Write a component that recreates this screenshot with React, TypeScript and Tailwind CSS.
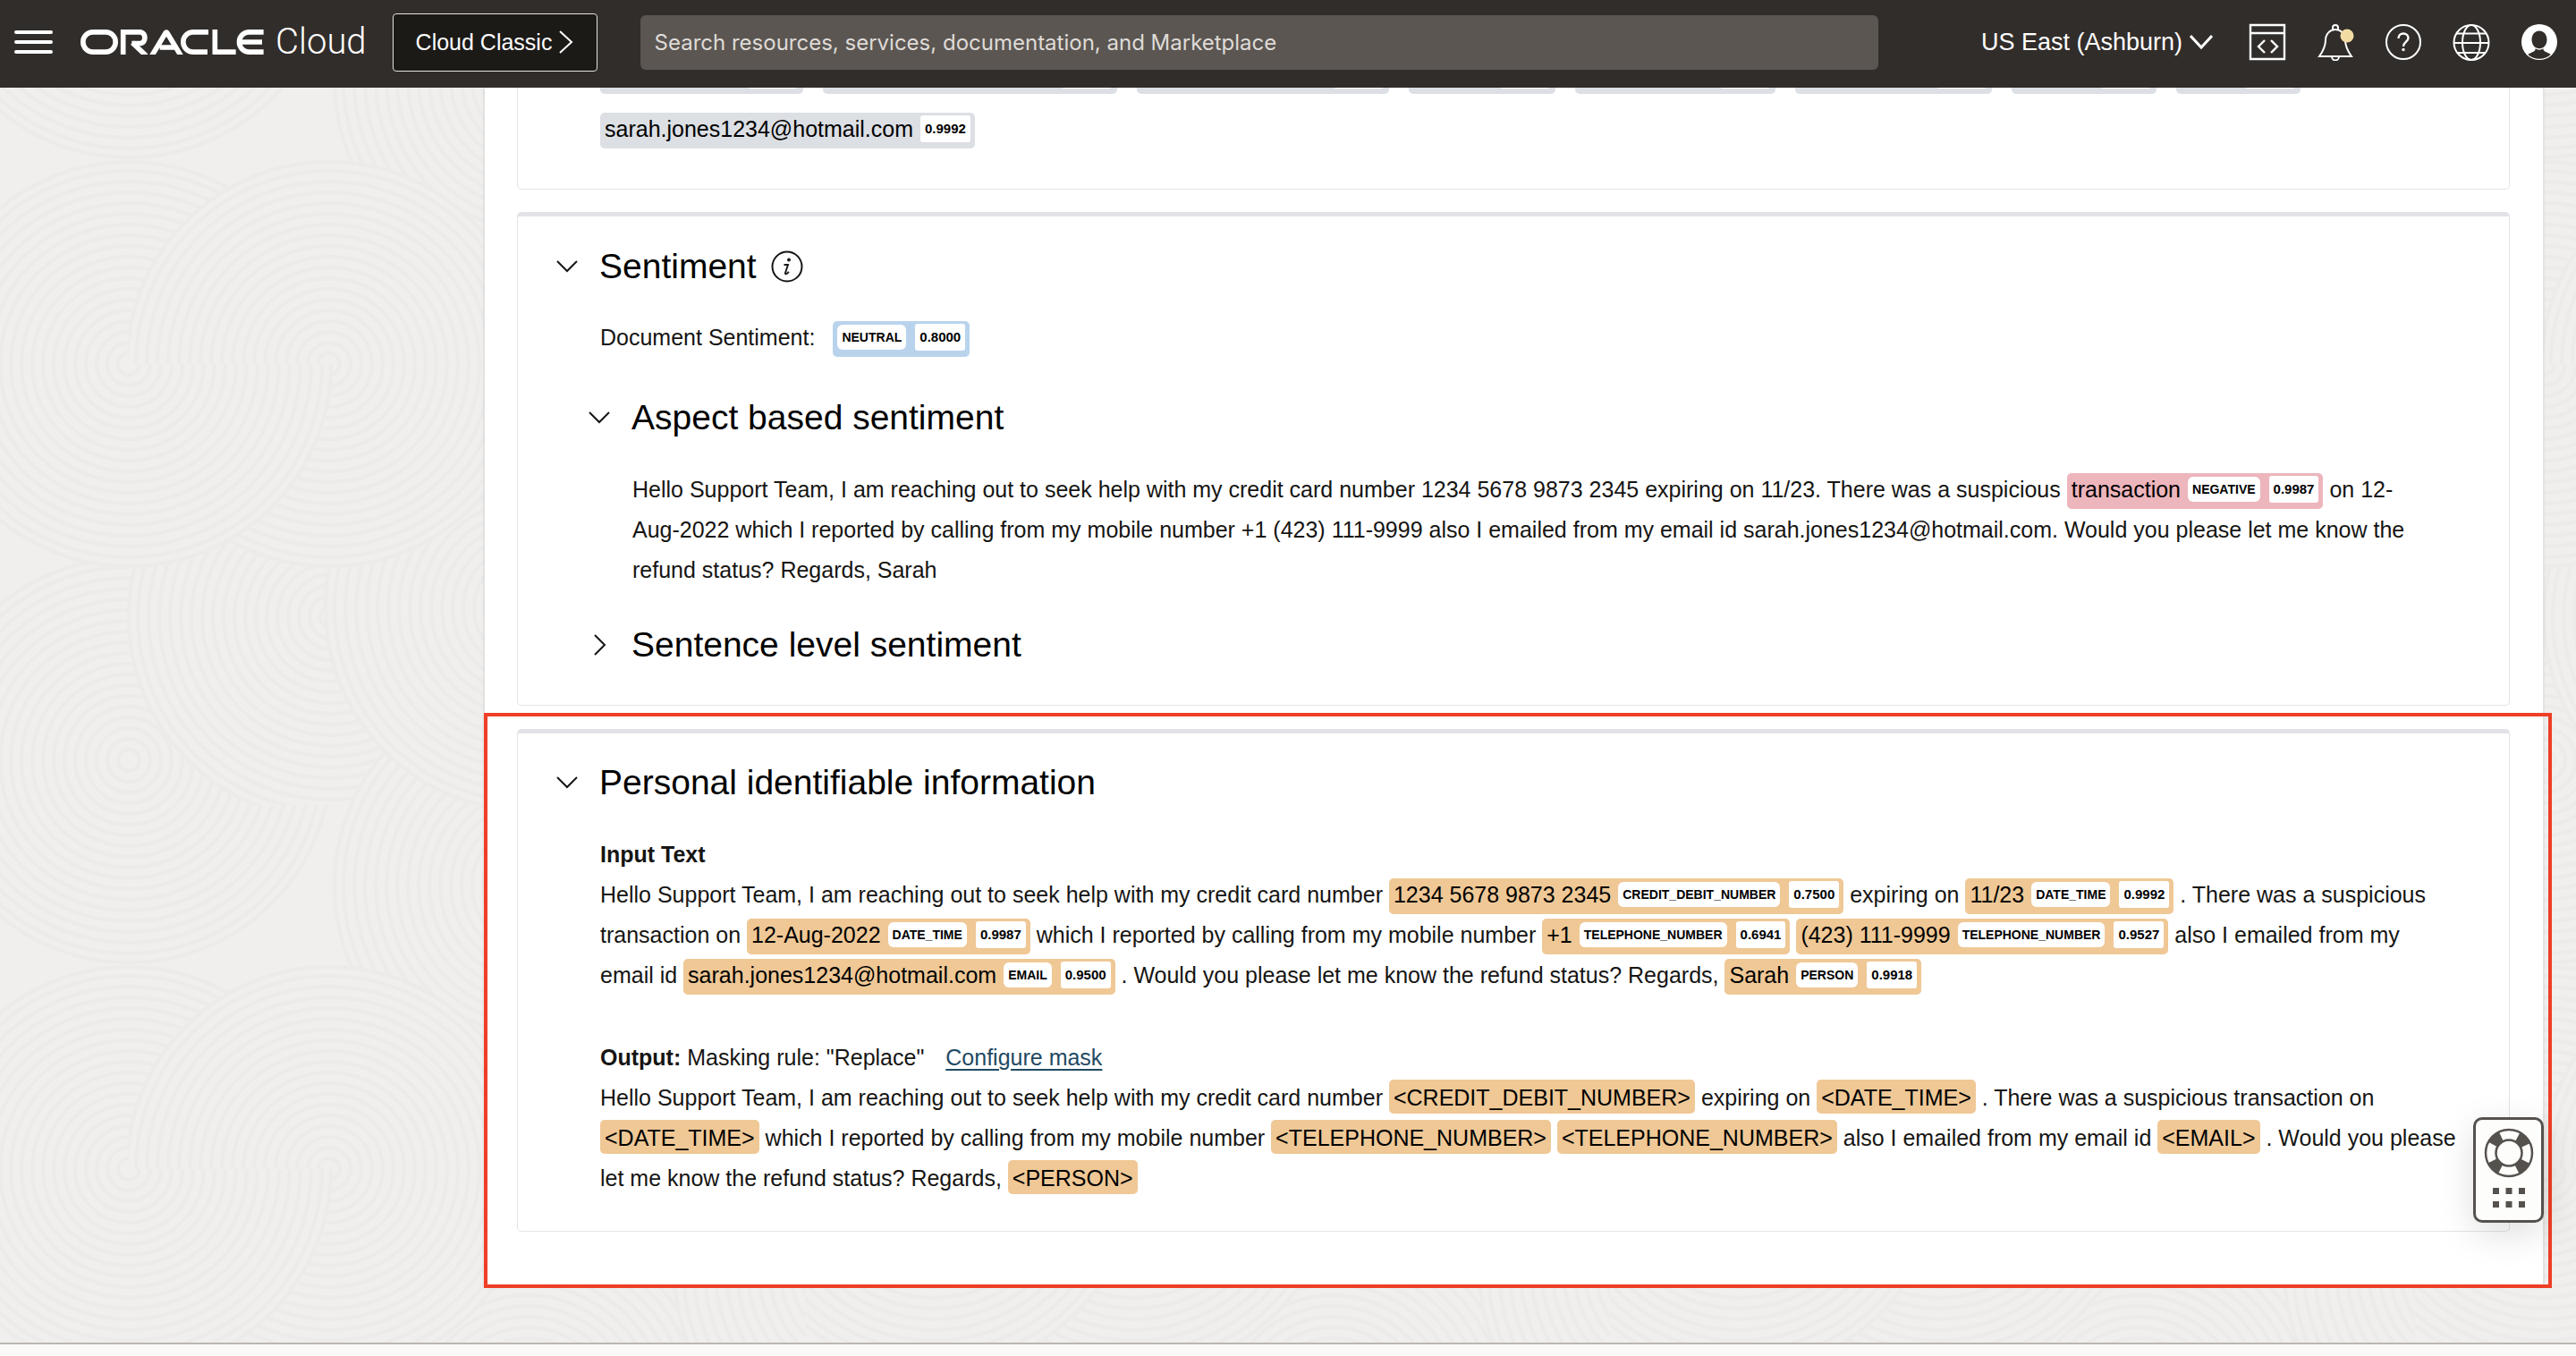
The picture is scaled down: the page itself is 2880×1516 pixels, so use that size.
import type { ReactNode } from "react";

const tones = {
  gray: "bg-[#dcdfe4]",
  blue: "bg-[#b9d3ed]",
  pink: "bg-[#edb5bc]",
  orange: "bg-[#efc896]",
};

function Tag({
  tone,
  text,
  label,
  score,
}: {
  tone: keyof typeof tones;
  text?: string;
  label?: string;
  score: string;
}) {
  return (
    <span
      className={`${tones[tone]} rounded-[5px] pt-1 pr-[5px] pb-2 pl-[5px] whitespace-nowrap text-black`}
    >
      {text && <span className="mr-2">{text}</span>}
      {label && (
        <span className="mr-[10px] inline-block rounded-[6px] bg-white px-[5px] align-[4px] text-[14px] leading-7 font-bold">
          {label}
        </span>
      )}
      <span className="inline-block rounded-[3px] bg-white px-[5px] align-[4px] text-[15px] leading-[30px] font-bold">
        {score}
      </span>
    </span>
  );
}

function Mask({ children }: { children: ReactNode }) {
  return (
    <span className="rounded-[5px] bg-[#efc896] px-[5px] pt-1.5 pb-1 whitespace-nowrap text-black">
      {children}
    </span>
  );
}

function Chevron({ open = true }: { open?: boolean }) {
  return open ? (
    <svg viewBox="0 0 24 24" className="size-6" fill="none" stroke="#161513" strokeWidth="2">
      <path d="M1 6l11 11L23 6" />
    </svg>
  ) : (
    <svg viewBox="0 0 24 24" className="size-6" fill="none" stroke="#161513" strokeWidth="2">
      <path d="M7 1l11 11L7 23" />
    </svg>
  );
}

function Heading({
  title,
  open = true,
  sub = false,
  children,
}: {
  title: string;
  open?: boolean;
  sub?: boolean;
  children?: ReactNode;
}) {
  const Level = sub ? "h3" : "h2";
  return (
    <div className="flex items-center">
      <Level className="text-[39px] leading-[52px] text-black">
        <button type="button" aria-expanded={open} className="flex items-center gap-6">
          <Chevron open={open} />
          {title}
        </button>
      </Level>
      {children}
    </div>
  );
}

const rings = Array.from({ length: 18 }, (_, i) => 12 + i * 12);
const swirls = [
  [144, 850], [144, -50], [820, 300], [370, 690], [600, 90], [600, 990],
  [820, 760], [820, -140], [590, 680], [590, -220], [368, 407], [144, 407],
  [980, 520],
];

function Backdrop() {
  return (
    <svg className="absolute inset-0 h-full w-full" aria-hidden="true">
      <defs>
        <clipPath id="half">
          <rect x="144" y="170" width="460" height="237" />
        </clipPath>
        <pattern id="swirls" y="-98" width="900" height="900" patternUnits="userSpaceOnUse">
          <rect width="900" height="900" fill="#f0efed" />
          {swirls.map(([x, y], i) => (
            <g key={i} fill="none" stroke="#ecebe9" strokeWidth="4">
              <circle cx={x} cy={y} r="226" fill="#f0efed" />
              {rings.map((r) => (
                <circle key={r} cx={x} cy={y} r={r} />
              ))}
            </g>
          ))}
          <g clipPath="url(#half)" fill="none" stroke="#ecebe9" strokeWidth="4">
            <circle cx="368" cy="407" r="226" fill="#f0efed" />
            {rings.map((r) => (
              <circle key={r} cx="368" cy="407" r={r} />
            ))}
          </g>
        </pattern>
      </defs>
      <rect width="100%" height="100%" fill="url(#swirls)" />
    </svg>
  );
}

function OracleLogo() {
  return (
    <svg
      viewBox="90 72 618 84"
      className="h-7 w-[206px]"
      fill="none"
      stroke="#fff"
      strokeWidth="17"
      role="img"
      aria-label="Oracle"
    >
      <rect x="98.500" y="80.500" width="109" height="67" rx="33.500" />
      <path d="M233 156V80.500H292a20 20 0 0 1 0 38H262" />
      <path d="M264 116L310 160" />
      <path d="M328 162L375 84Q378 79 381 84L428 162M356 132H408" />
      <path d="M519 80.500H468a33.500 33.500 0 0 0 0 67H516" />
      <path d="M541 72V147.500H611" />
      <path d="M704 80.500H656a33.500 33.500 0 0 0 0 67H704M628 114H699" />
    </svg>
  );
}

function Header() {
  return (
    <header className="relative z-10 flex h-[98px] items-center bg-[#312d2a] pr-5 pb-1 pl-4 text-white">
      <button type="button" aria-label="Navigation menu" className="flex w-[43px] flex-col gap-[7px]">
        <span className="h-1 rounded-full bg-white" />
        <span className="h-1 rounded-full bg-white" />
        <span className="h-1 rounded-full bg-white" />
      </button>
      <a href="#" className="ml-[31px] flex items-center gap-3">
        <OracleLogo />
        <span className="font-[Roboto] text-[40px] leading-[48px] font-light">Cloud</span>
      </a>
      <button
        type="button"
        className="ml-[29px] flex h-[65px] w-[229px] shrink-0 items-center gap-2 rounded-[4px] border border-[#e4e2df] bg-[#1b1a17] pl-[25px] text-[25px] whitespace-nowrap"
      >
        Cloud Classic
        <svg viewBox="0 0 16 26" className="h-[26px] w-4" fill="none" stroke="#fff" strokeWidth="2">
          <path d="M1 1l13 12L1 25" />
        </svg>
      </button>
      <input
        type="search"
        aria-label="Search"
        placeholder="Search resources, services, documentation, and Marketplace"
        className="ml-12 h-[61px] min-w-0 flex-1 rounded-[6px] bg-[#5b5652] px-4 font-[Inter] text-[24px] placeholder:text-[#dfdbd7]"
      />
      <button type="button" className="ml-[115px] flex items-center gap-2 text-[27px] whitespace-nowrap">
        US East (Ashburn)
        <svg viewBox="0 0 26 18" className="h-[18px] w-[26px]" fill="none" stroke="#fff" strokeWidth="3">
          <path d="M1 2l12 13L25 2" />
        </svg>
      </button>
      <nav aria-label="Tools" className="ml-10 flex gap-[34px]">
        <button type="button" aria-label="Developer tools">
          <svg viewBox="0 0 42 42" className="size-[42px]" fill="none" stroke="#fff" strokeWidth="2.400">
            <path d="M2 2h38v38H2zM2 11h38M18 19l-7 7 7 7M25 19l7 7-7 7" />
          </svg>
        </button>
        <button type="button" aria-label="Notifications">
          <svg viewBox="0 0 42 42" className="size-[42px]" fill="none" stroke="#fff" strokeWidth="2">
            <path d="M18 8V5a3 3 0 0 1 6 0v3" />
            <path d="M3 37h36c-5-7-7-12-7-18 0-7-5-12-11-12s-11 5-11 12c0 6-2 11-7 18z" />
            <path d="M17 37a4 4.500 0 0 0 8 0" />
            <circle cx="34" cy="14" r="7.500" fill="#f2dca3" stroke="none" />
          </svg>
        </button>
        <button type="button" aria-label="Help">
          <svg viewBox="0 0 42 42" className="size-[42px]" fill="none" stroke="#fff">
            <circle cx="21" cy="21" r="19" strokeWidth="2" />
            <path d="M15.500 17c0-3.500 2.500-5.500 5.500-5.500s5.500 2 5.500 5c0 4-5.500 4.500-5.500 9.500" strokeWidth="2.400" />
            <circle cx="21" cy="29.500" r="1.700" fill="#fff" stroke="none" />
          </svg>
        </button>
        <button type="button" aria-label="Language">
          <svg viewBox="0 0 42 42" className="size-[42px]" fill="none" stroke="#fff" strokeWidth="2">
            <circle cx="21" cy="21.500" r="19.500" />
            <ellipse cx="21" cy="21.500" rx="10" ry="19.500" />
            <path d="M1 22h40M5 11.500h32M5 33h32" />
          </svg>
        </button>
        <button type="button" aria-label="Profile">
          <svg viewBox="0 0 42 42" className="size-[42px]">
            <circle cx="21" cy="21" r="20" fill="#fff" />
            <path
              d="M21 8.500c-5 0-8.500 4.300-8.500 10 0 4 1.800 7.200 4.300 8.800 0 3-1 4.200-3.600 5l-5 2.500C11.500 38 16 39.800 21 39.800S30.500 38 33.800 34.800l-5-2.500c-2.600-.8-3.600-2-3.600-5 2.500-1.600 4.300-4.800 4.300-8.800 0-5.700-3.500-10-8.500-10z"
              fill="#312d2a"
            />
            <path d="M16.500 27.500q4.500 3 9 0" fill="none" stroke="#fff" strokeWidth="1.400" />
          </svg>
        </button>
      </nav>
    </header>
  );
}

const hiddenRow = [
  "w-[227px]", "w-[329px]", "w-[282px]", "w-[164px]",
  "w-[224px]", "w-[220px]", "w-[162px]", "w-[139px]",
];

const card = "rounded-[5px] border border-[#e3e3e6] bg-white";

export default function App() {
  return (
    <div className="flex min-h-screen flex-col bg-[#f0efed] font-['Liberation_Sans',Arial,sans-serif] text-[25px] leading-[45px] text-[#161513]">
      <Header />
      <div className="relative flex-1">
        <Backdrop />
        <main className="relative mr-9 ml-[541px] border-x border-[#e2e1e0] bg-white pr-[37px] pb-[60px] pl-9 shadow-sm">
          <section aria-label="Entities" className={`${card} rounded-t-none border-t-0 pb-11 pl-[92px]`}>
            <div className="flex h-[7px] items-end gap-[22px] overflow-hidden">
              {hiddenRow.map((width) => (
                <span key={width} className={`${width} flex h-10 justify-end rounded-[5px] bg-[#dcdfe4] pt-1 pr-[6px] pb-1.5`}>
                  <span className="w-14 rounded-[3px] bg-white" />
                </span>
              ))}
            </div>
            <p className="mt-[17px]">
              <Tag tone="gray" text="sarah.jones1234@hotmail.com" score="0.9992" />
            </p>
          </section>

          <section className={`${card} mt-[25px] border-t-[5px] border-t-[#e2e2e7] pt-[30px] pb-[41px] pl-[43px]`}>
            <Heading title="Sentiment">
              <button type="button" aria-label="About sentiment" className="ml-4">
                <svg viewBox="0 0 36 36" className="size-9" fill="none" stroke="#161513">
                  <circle cx="18" cy="18" r="16.500" strokeWidth="2" />
                  <circle cx="20" cy="10.500" r="1.900" fill="#161513" stroke="none" />
                  <path d="M14.500 16h4.500l-3 9q-.4 1.500 1 1.200 1.500-.4 2.800-2.500" strokeWidth="1.900" />
                </svg>
              </button>
            </Heading>
            <p className="mt-[31px] flex gap-5 pl-[49px]">
              <span>Document Sentiment:</span>
              <span>
                <Tag tone="blue" label="NEUTRAL" score="0.8000" />
              </span>
            </p>
            <div className="mt-[41px] pl-9">
              <Heading title="Aspect based sentiment" sub />
              <p className="mt-8 pr-20 pl-[49px]">
                Hello Support Team, I am reaching out to seek help with my credit card number 1234 5678 9873
                2345 expiring on 11/23. There was a suspicious{" "}
                <Tag tone="pink" text="transaction" label="NEGATIVE" score="0.9987" /> on 12-Aug-2022 which I
                reported by calling from my mobile number +1 (423) 111-9999 also I emailed from my email id
                sarah.jones1234@hotmail.com. Would you please let me know the refund status? Regards, Sarah
              </p>
              <div className="mt-[35px]">
                <Heading title="Sentence level sentiment" sub open={false} />
              </div>
            </div>
          </section>

          <div className="relative mt-[26px]">
            <section className={`${card} border-t-[5px] border-t-[#e2e3e8] pt-[29px] pb-9 pl-[43px]`}>
              <Heading title="Personal identifiable information" />
              <div className="mt-8 pr-10 pl-[49px]">
                <h4 className="font-bold">Input Text</h4>
                <p className="pr-6">
                  Hello Support Team, I am reaching out to seek help with my credit card number{" "}
                  <Tag tone="orange" text="1234 5678 9873 2345" label="CREDIT_DEBIT_NUMBER" score="0.7500" />{" "}
                  expiring on <Tag tone="orange" text="11/23" label="DATE_TIME" score="0.9992" /> . There was a
                  suspicious transaction on{" "}
                  <Tag tone="orange" text="12-Aug-2022" label="DATE_TIME" score="0.9987" /> which I reported by
                  calling from my mobile number{" "}
                  <Tag tone="orange" text="+1" label="TELEPHONE_NUMBER" score="0.6941" />{" "}
                  <Tag tone="orange" text="(423) 111-9999" label="TELEPHONE_NUMBER" score="0.9527" /> also I
                  emailed from my email id{" "}
                  <Tag tone="orange" text="sarah.jones1234@hotmail.com" label="EMAIL" score="0.9500" /> . Would
                  you please let me know the refund status? Regards,{" "}
                  <Tag tone="orange" text="Sarah" label="PERSON" score="0.9918" />
                </p>
                <p className="mt-[47px]">
                  <strong>Output:</strong> Masking rule: "Replace"
                  <a href="#" className="ml-6 text-[#1f4a62] underline decoration-2 underline-offset-4">
                    Configure mask
                  </a>
                </p>
                <p>
                  Hello Support Team, I am reaching out to seek help with my credit card number{" "}
                  <Mask>&lt;CREDIT_DEBIT_NUMBER&gt;</Mask> expiring on <Mask>&lt;DATE_TIME&gt;</Mask> . There
                  was a suspicious transaction on <Mask>&lt;DATE_TIME&gt;</Mask> which I reported by calling
                  from my mobile number <Mask>&lt;TELEPHONE_NUMBER&gt;</Mask>{" "}
                  <Mask>&lt;TELEPHONE_NUMBER&gt;</Mask> also I emailed from my email id{" "}
                  <Mask>&lt;EMAIL&gt;</Mask> . Would you please let me know the refund status? Regards,{" "}
                  <Mask>&lt;PERSON&gt;</Mask>
                </p>
              </div>
            </section>
            <div className="pointer-events-none absolute -top-[18px] -right-[47px] -bottom-[63px] -left-[37px] border-4 border-[#ee3f26]" />
          </div>
        </main>
      </div>
      <footer className="relative h-[15px] border-t-2 border-[#bcb6b1] bg-[#fbf9f8]" />

      <button
        type="button"
        aria-label="Support"
        className="fixed right-9 bottom-[149px] z-20 flex h-[118px] w-[79px] flex-col items-center gap-2.5 rounded-[10px] border-3 border-[#55524e] bg-[#fdfdfb] pt-[9px] shadow-[0_12px_40px_rgba(0,0,0,0.13)]"
      >
        <svg viewBox="0 0 56 56" className="size-14" fill="none" stroke="#55524e">
          <circle cx="28" cy="28" r="20.500" strokeWidth="12" strokeDasharray="13 19.200" strokeDashoffset="-9.600" />
          <circle cx="28" cy="28" r="26" strokeWidth="2.500" />
          <circle cx="28" cy="28" r="14.500" strokeWidth="2.500" />
        </svg>
        <svg viewBox="0 0 36 24" className="h-6 w-9" fill="#55524e">
          <path d="M0 1h7v7H0zM14.500 1h7v7h-7zM29 1h7v7h-7zM0 16h7v7H0zM14.500 16h7v7h-7zM29 16h7v7h-7z" />
        </svg>
      </button>
    </div>
  );
}
